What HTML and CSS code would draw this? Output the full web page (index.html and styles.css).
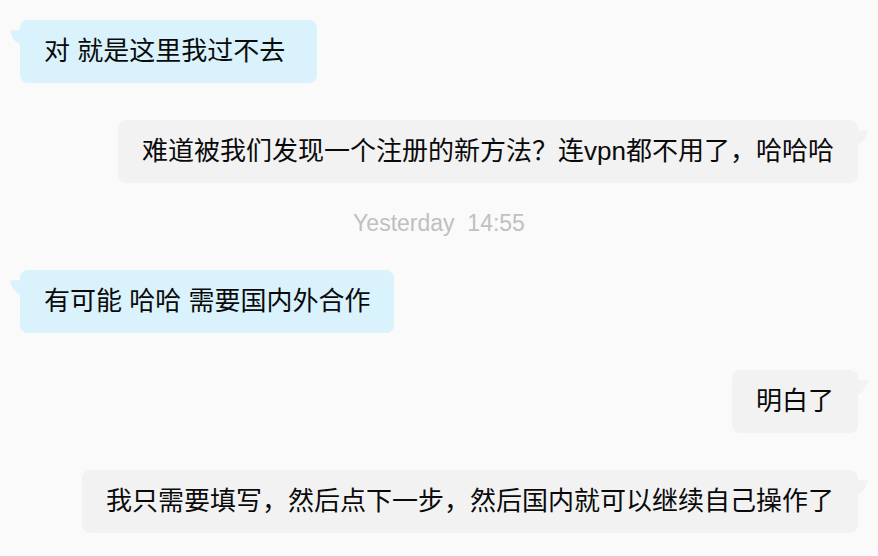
FILE: index.html
```html
<!DOCTYPE html>
<html lang="zh-CN">
<head>
<meta charset="utf-8">
<title>Chat</title>
<link rel="stylesheet" href="styles.css">
</head>
<body>
<main class="chat">
  <div class="row in">
    <div class="bubble bubble-wide">
      <svg class="tail" width="11" height="15" viewBox="0 0 11 15"><path d="M0 0.5 L11 0 V15 Q3 12 0 0.5 Z"/></svg>
      对 就是这里我过不去
    </div>
  </div>
  <div class="row out">
    <div class="bubble">
      <svg class="tail" width="11" height="15" viewBox="0 0 11 15"><path d="M0 0.5 L11 0 V15 Q3 12 0 0.5 Z"/></svg>
      难道被我们发现一个注册的新方法？连vpn都不用了，哈哈哈
    </div>
  </div>
  <div class="time">Yesterday&nbsp;&nbsp;14:55</div>
  <div class="row in">
    <div class="bubble">
      <svg class="tail" width="11" height="15" viewBox="0 0 11 15"><path d="M0 0.5 L11 0 V15 Q3 12 0 0.5 Z"/></svg>
      有可能 哈哈 需要国内外合作
    </div>
  </div>
  <div class="row out">
    <div class="bubble">
      <svg class="tail" width="11" height="15" viewBox="0 0 11 15"><path d="M0 0.5 L11 0 V15 Q3 12 0 0.5 Z"/></svg>
      明白了
    </div>
  </div>
  <div class="row out">
    <div class="bubble">
      <svg class="tail" width="11" height="15" viewBox="0 0 11 15"><path d="M0 0.5 L11 0 V15 Q3 12 0 0.5 Z"/></svg>
      我只需要填写，然后点下一步，然后国内就可以继续自己操作了
    </div>
  </div>
</main>
</body>
</html>
```
FILE: styles.css
```css
html, body {
  margin: 0;
  padding: 0;
  background: #fafafa;
}

.chat {
  display: flex;
  flex-direction: column;
  padding: 20px 20px 0;
  font-family: "Liberation Sans", "Noto Sans CJK SC", sans-serif;
  color: #0a0a0a;
}

.row {
  display: flex;
  margin-bottom: 37px;
}

.row.in {
  justify-content: flex-start;
}

.row.out {
  justify-content: flex-end;
}

.bubble {
  position: relative;
  padding: 14px 24px;
  border-radius: 8px;
  font-size: 26px;
  line-height: 35px;
  white-space: nowrap;
}

.bubble-wide {
  padding-right: 32px;
}

.in .bubble {
  background: #d9f2fc;
}

.out .bubble {
  background: #f2f2f2;
}

.tail {
  position: absolute;
  top: 10px;
  display: block;
}

.in .tail {
  left: -10px;
  fill: #d9f2fc;
}

.out .tail {
  right: -10px;
  fill: #f2f2f2;
  transform: scaleX(-1);
}

.time {
  margin: -10px 0 34px;
  text-align: center;
  font-family: "Liberation Sans", Arial, sans-serif;
  font-size: 23px;
  line-height: 26px;
  color: #c0c0c0;
}
```
